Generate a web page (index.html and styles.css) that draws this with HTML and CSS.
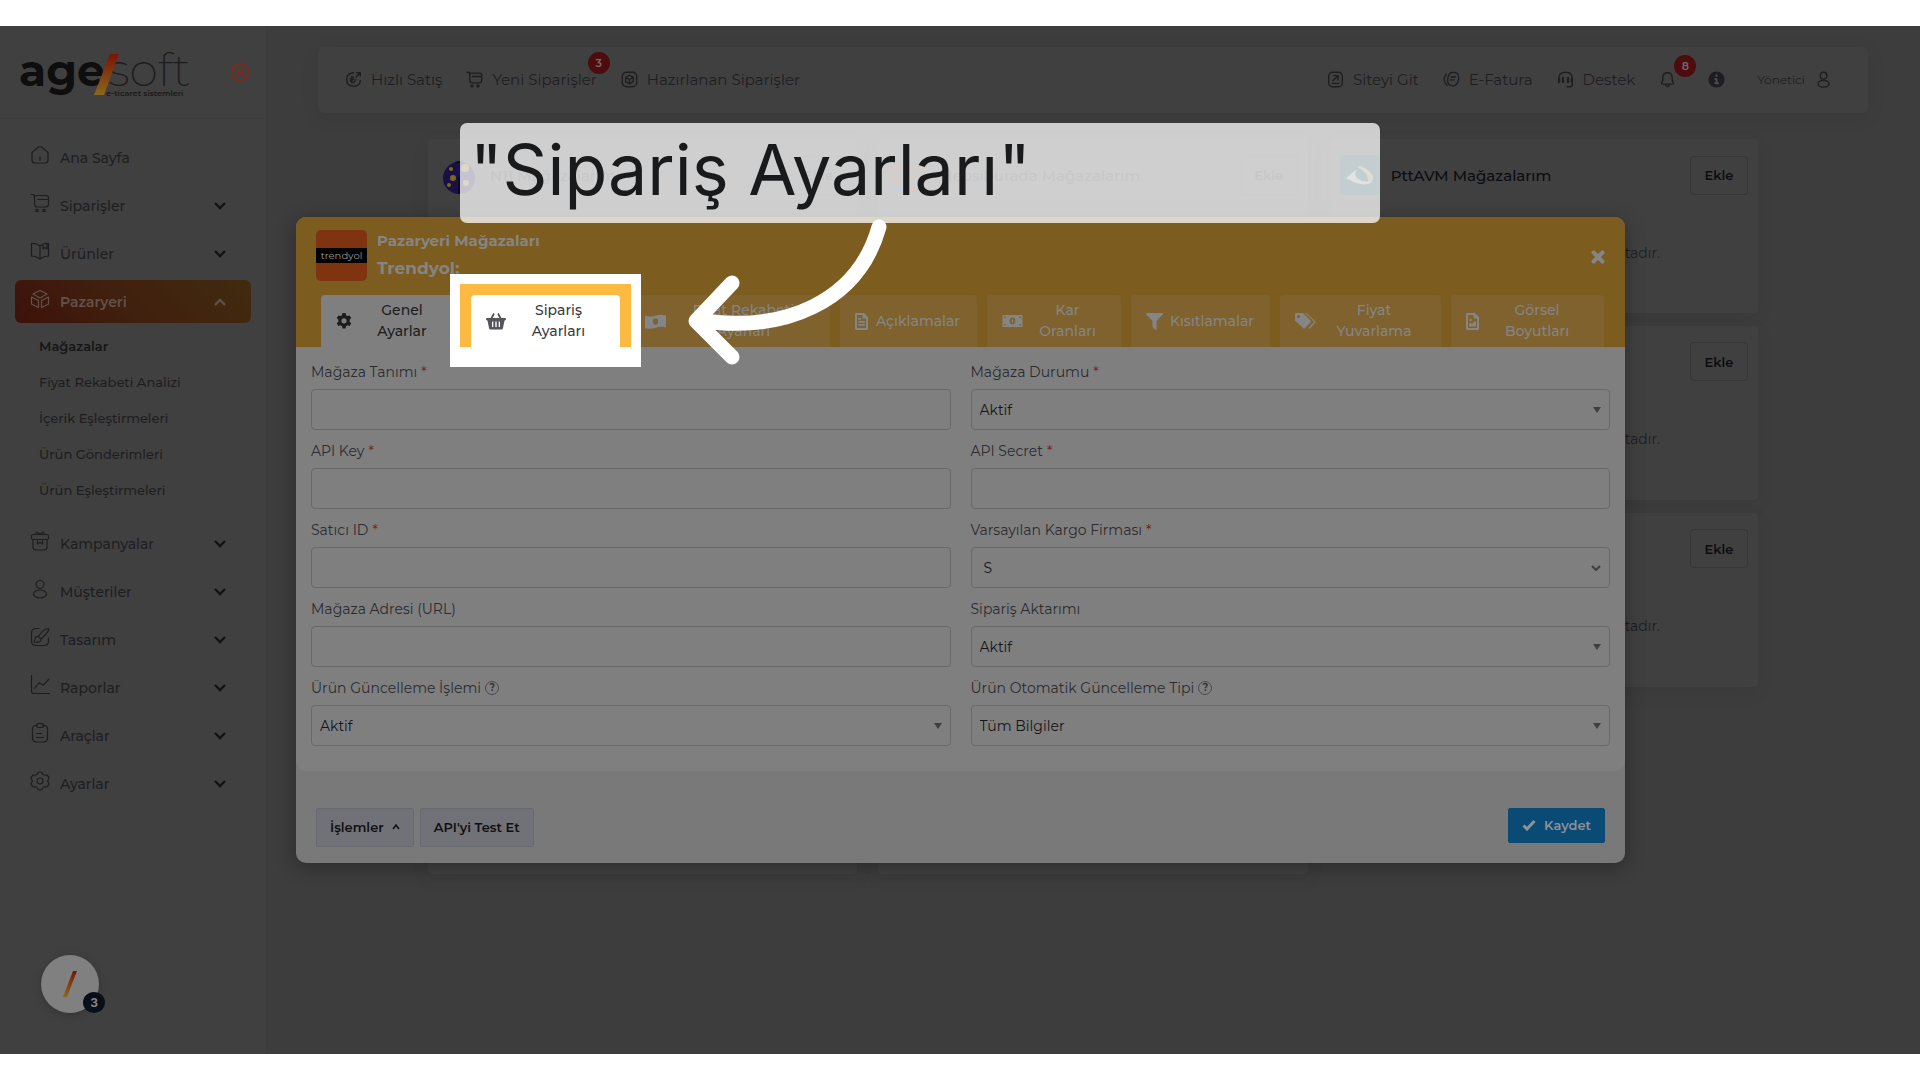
FILE: index.html
```
<!DOCTYPE html>
<html lang="tr">
<head>
    <meta charset="UTF-8">
    <meta name="viewport" content="width=device-width, initial-scale=1.0">
    <title>Pazaryeri Mağazaları</title>
    <link rel="stylesheet" href="styles.css">
</head>
<body>
    <!-- shared icons -->
    <svg class="defs" width="0" height="0" aria-hidden="true">
        <defs>
            <linearGradient id="flame" x1="0" y1="0" x2="0" y2="1">
                <stop offset="0" stop-color="#7a1404"/>
                <stop offset="1" stop-color="#8a681c"/>
            </linearGradient>
        </defs>
        <symbol id="i-down" viewBox="0 0 14 10"><path d="M2 2l5 5 5-5" fill="none" stroke="currentColor" stroke-width="2.4"/></symbol>
        <symbol id="i-up" viewBox="0 0 14 10"><path d="M2 8l5-5 5 5" fill="none" stroke="currentColor" stroke-width="2.4"/></symbol>
        <symbol id="i-home" viewBox="0 0 20 20"><path d="M2 7.500L8.500 2q1.500-1 3 0L18 7.500V15q0 3-3 3H5q-3 0-3-3zM10 12v3"/></symbol>
        <symbol id="i-cart" viewBox="0 0 20 20"><path d="M1 1.500h2.500L4.500 5M4.500 2.500H16q2.500 0 2.500 2.500v6q0 3-3 3H7.500q-3 0-3-3zM7.500 6.500h10"/><circle cx="7" cy="17.500" r="1.200"/><circle cx="14" cy="17.500" r="1.200"/></symbol>
        <symbol id="i-book" viewBox="0 0 20 20"><path d="M10 5Q6.500 2 1.500 2.500v12.500Q6 15 10 18q4-3 8.500-3V2.500Q13.500 2 10 5zM10 5v13M13 3v5l2-1.500L17 8V3"/></symbol>
        <symbol id="i-box" viewBox="0 0 20 20"><path d="M10 1.500l7 3.500-7 4-7-4zM1.500 8l7 3.500v7l-7-3.500zM18.500 8l-7 3.500v7l7-3.500z"/></symbol>
        <symbol id="i-gift" viewBox="0 0 20 20"><path d="M3 3.500h14q1.500 0 1.500 2v1.500q0 1.500-1.500 1.500H3Q1.500 8.500 1.500 7V5.500q0-2 1.500-2zM3 8.500V16q0 3 3 3h8q3 0 3-3V8.500M5 3.500l2-2.500 3 2.500L13 1l2 2.500M7.500 8.500v4.500l2.500-1.500 2.500 1.500V8.500"/></symbol>
        <symbol id="i-user" viewBox="0 0 20 20"><circle cx="10" cy="5.500" r="4"/><ellipse cx="10" cy="15" rx="6.500" ry="4"/></symbol>
        <symbol id="i-brush" viewBox="0 0 20 20"><path d="M9 1.500H6Q1.500 1.500 1.500 6v8q0 4.500 4.500 4.500h8q4.500 0 4.500-4.500v-3M8.500 9.500Q13 2 18 1.500q1.500 0 .5 2-2 4-7.500 8.500zM8.500 9.500q-3-.5-3.500 3L4 15q7 1.500 7-3"/></symbol>
        <symbol id="i-chart" viewBox="0 0 20 20"><path d="M1.500 0v16q0 2.500 2.500 2.500h16M4.500 13.500l4-5q1-1 2 0l1.500 1q1 1 2 0l5-5.500"/></symbol>
        <symbol id="i-clip" viewBox="0 0 20 20"><path d="M7 2.500H6Q2.500 2.500 2.500 6v9q0 4 4 4h7q4 0 4-4V6q0-3.500-3.500-3.500h-1M6.500 10.500h5M6.500 14.500h7"/><rect x="6.500" y=".7" width="7" height="3.800" rx="1.900"/></symbol>
        <symbol id="i-cog" viewBox="0 0 20 20"><circle cx="10" cy="10" r="3"/><path d="M8 1.500q2-1 4 0l.8 2 2.200.8 2-.3q1.800 1.500 2 3.500L17.500 10l1.500 2.500q-.5 2-2 3.500l-2-.3-2.200.8-.8 2q-2 1-4 0l-.8-2-2.200-.8-2 .3q-1.500-1.500-2-3.500L2.500 10 1 7.500Q1.500 5.500 3 4l2 .3 2.200-.8z"/></symbol>
        <symbol id="i-sale" viewBox="0 0 20 20"><path d="M10 2Q2 2.500 2 10t8 8q8 0 8-7M13 7l5-5M14 2h4v4M8 6v8q4 0 4-4M6 9.500l4-2M6 12l4-2"/></symbol>
        <symbol id="i-pack" viewBox="0 0 20 20"><rect x="1.500" y="1.500" width="17" height="17" rx="5"/><path d="M10 5l4.500 2.500v5L10 15l-4.500-2.500v-5zM5.500 7.500L10 10l4.500-2.500M10 10v5"/></symbol>
        <symbol id="i-link" viewBox="0 0 20 20"><rect x="2" y="1.500" width="16" height="17" rx="4.500"/><path d="M7 11.500l5.500-5.500M8 5.500h5v5M6 14.500h8"/></symbol>
        <symbol id="i-bill" viewBox="0 0 20 20"><path d="M9 2q5-1 8 1 2 2 1.500 6Q18 15 14 17q-4 1.500-7-1-2-2-1.500-6Q6 4 9 2zM4 4q-3 2-2.500 7 .5 4 3.500 6M9.500 7h5M9 10.500h4"/></symbol>
        <symbol id="i-help" viewBox="0 0 20 20"><path d="M2 10V9Q2 1.500 10 1.500T18 9v7q0 2.500-2.500 2.500H12"/><path d="M2.500 9v4M7 8v5M13 8v5M17.500 9v4" stroke-width="2.600"/></symbol>
        <symbol id="i-bell" viewBox="0 0 20 20"><path d="M10 2Q4.500 2 4.500 8v3L3 14q0 1.500 1.500 1.500h11Q17 15.500 17 14l-1.500-3V8Q15.500 2 10 2zM7.500 16q2.500 4.500 5 0"/></symbol>
        <symbol id="i-info" viewBox="0 0 20 20"><circle cx="10" cy="10" r="9.500" fill="currentColor" stroke="none"/><path d="M8.500 9.500H10V14M8.500 14.500h3.500M10 5v1" stroke="#4b4b50" stroke-width="2.400"/></symbol>
        <symbol id="i-gear" viewBox="0 0 16 16"><path fill="currentColor" fill-rule="evenodd" d="M6.500 0h3l.5 2.200 1.500.9L13.700 2.500l1.500 2.600L13.600 6.700v2l1.600 1.600-1.500 2.600-2.200-.6-1.500.9-.5 2.300h-3L6 13.200l-1.500-.9-2.200.6L.8 10.300l1.600-1.600v-2L.8 5.100l1.500-2.600 2.200.6L6 2.200zM8 5.200a2.600 2.600 0 100 5.200 2.600 2.600 0 000-5.200z"/></symbol>
        <symbol id="i-basket" viewBox="0 0 20 18"><path d="M4.500 8L8 1.500M15.500 8L12 1.500" stroke="currentColor" stroke-width="1.800" fill="none"/><path fill="currentColor" fill-rule="evenodd" d="M1 6h18q1 0 1 1t-1 1.500h-.5L17 16q-.3 1.500-1.500 1.500h-11Q3.300 17.500 3 16L1.500 8.500H1Q0 8 0 7t1-1zM6 9.500v5.500h1.300V9.500zM9.300 9.500v5.500h1.400V9.500zM12.700 9.500v5.500H14V9.500z"/></symbol>
        <symbol id="i-money" viewBox="0 0 20 14"><path fill="currentColor" fill-rule="evenodd" d="M0 1h20v12H0zM10 3.500a2.800 3.500 0 100 7 2.800 3.500 0 000-7zM1.500 2.500v1.500h1.500V2.500zM17 2.500v1.500h1.500V2.500zM1.500 10v1.500h1.500V10zM17 10v1.500h1.500V10zM9.500 5h1v4h-1z"/></symbol>
        <symbol id="i-wavemoney" viewBox="0 0 20 16"><path fill="currentColor" fill-rule="evenodd" d="M0 2.500q5 1.500 10 0t10-.5v11.500q-5-1-10 .5t-10 .5zM10 5a2.500 3 0 100 6 2.500 3 0 000-6z"/></symbol>
        <symbol id="i-file" viewBox="0 0 13 17"><path fill="currentColor" fill-rule="evenodd" d="M1.500 0H9l4 4v11.500q0 1.500-1.500 1.500h-10Q0 17 0 15.500v-14Q0 0 1.500 0zM2 2v13h9V5.500H7.500V2z"/><path fill="currentColor" d="M3.200 8h6.600v1.700H3.200zM3.200 11h6.600v1.700H3.200zM3.200 5h2.800v1.700H3.200z"/></symbol>
        <symbol id="i-filter" viewBox="0 0 17 17"><path fill="currentColor" d="M.5 0h16q1 .5.300 1.500L10.500 8v8.500q-.5.800-1.500 0L6.500 14V8L.2 1.500Q-.3.500.500 0z"/></symbol>
        <symbol id="i-tags" viewBox="0 0 21 16"><path fill="currentColor" fill-rule="evenodd" d="M0 1.500Q0 0 1.500 0H8l7.500 7.500q1 1 0 2L10 15q-1 1-2 0L0 7.500zM3.500 2a1.500 1.500 0 100 3 1.500 1.500 0 000-3zM10 0h1.500l8.500 8q1 1 0 2l-5.500 6-1-1 5-5.500q.7-.7 0-1.500z"/></symbol>
        <symbol id="i-image" viewBox="0 0 13 17"><path fill="currentColor" fill-rule="evenodd" d="M1.500 0H9l4 4v11.500q0 1.500-1.500 1.500h-10Q0 17 0 15.500v-14Q0 0 1.500 0zM2 2v13h9V5.500H7.500V2z"/><path fill="currentColor" d="M3 13.500V11l1.500-1.500L6 11l3-3 1 1v4.500z"/><circle cx="4.500" cy="7" r="1.300" fill="currentColor"/></symbol>
    </svg>

    <div class="screen">
        <aside class="sidebar">
            <div class="brand">
                <svg class="logo" width="172" height="60" viewBox="0 0 172 60" role="img" aria-label="agesoft">
                    <text class="logo-bold" x="2" y="44">age</text>
                    <text class="logo-thin" x="91" y="44">soft</text>
                    <path d="M93 12h9L87 53H77z" fill="url(#flame)"/>
                    <text class="logo-tag" x="89" y="54">e-ticaret sistemleri</text>
                </svg>
                <svg class="target" width="20" height="20" viewBox="0 0 20 20"><circle cx="10" cy="10" r="8.500"/><circle cx="10" cy="10" r="2.500"/></svg>
            </div>
            <nav class="menu">
                <a href="#"><svg class="icon"><use href="#i-home"/></svg><span>Ana Sayfa</span></a>
                <a href="#"><svg class="icon"><use href="#i-cart"/></svg><span>Siparişler</span><svg class="chev"><use href="#i-down"/></svg></a>
                <a href="#"><svg class="icon"><use href="#i-book"/></svg><span>Ürünler</span><svg class="chev"><use href="#i-down"/></svg></a>
                <a href="#" class="active"><svg class="icon"><use href="#i-box"/></svg><span>Pazaryeri</span><svg class="chev"><use href="#i-up"/></svg></a>
                <div class="submenu">
                    <a href="#" class="current">Mağazalar</a>
                    <a href="#">Fiyat Rekabeti Analizi</a>
                    <a href="#">İçerik Eşleştirmeleri</a>
                    <a href="#">Ürün Gönderimleri</a>
                    <a href="#">Ürün Eşleştirmeleri</a>
                </div>
                <a href="#"><svg class="icon"><use href="#i-gift"/></svg><span>Kampanyalar</span><svg class="chev"><use href="#i-down"/></svg></a>
                <a href="#"><svg class="icon"><use href="#i-user"/></svg><span>Müşteriler</span><svg class="chev"><use href="#i-down"/></svg></a>
                <a href="#"><svg class="icon"><use href="#i-brush"/></svg><span>Tasarım</span><svg class="chev"><use href="#i-down"/></svg></a>
                <a href="#"><svg class="icon"><use href="#i-chart"/></svg><span>Raporlar</span><svg class="chev"><use href="#i-down"/></svg></a>
                <a href="#"><svg class="icon"><use href="#i-clip"/></svg><span>Araçlar</span><svg class="chev"><use href="#i-down"/></svg></a>
                <a href="#"><svg class="icon"><use href="#i-cog"/></svg><span>Ayarlar</span><svg class="chev"><use href="#i-down"/></svg></a>
            </nav>
            <button class="chat" aria-label="Sohbet">
                <svg width="14" height="26" viewBox="0 0 14 26"><path d="M10 0h4L4 26H0z" fill="url(#flame)"/></svg>
                <span class="chat-count">3</span>
            </button>
        </aside>

        <div class="main">
            <header class="topbar">
                <a href="#"><svg class="icon"><use href="#i-sale"/></svg>Hızlı Satış</a>
                <a href="#"><svg class="icon"><use href="#i-cart"/></svg>Yeni Siparişler<span class="badge">3</span></a>
                <a href="#"><svg class="icon"><use href="#i-pack"/></svg>Hazırlanan Siparişler</a>
                <span class="spacer"></span>
                <a href="#"><svg class="icon"><use href="#i-link"/></svg>Siteyi Git</a>
                <a href="#"><svg class="icon"><use href="#i-bill"/></svg>E-Fatura</a>
                <a href="#"><svg class="icon"><use href="#i-help"/></svg>Destek</a>
                <a href="#" aria-label="Bildirimler"><svg class="icon"><use href="#i-bell"/></svg><span class="badge badge-bell">8</span></a>
                <a href="#" class="info" aria-label="Bilgi"><svg class="icon"><use href="#i-info"/></svg></a>
                <a href="#" class="account">Yönetici<svg class="icon"><use href="#i-user"/></svg></a>
            </header>

            <div class="stores">
                <section class="store covered">
                    <div class="store-head">
                        <svg width="40" height="40" viewBox="0 0 40 40"><circle cx="20" cy="23" r="16" fill="#1a1047"/><path d="M20 22v17" stroke="#0b0820" stroke-width="2"/><path d="M15 8q5-4 10 0z" fill="#0b0820"/><g fill="#7a6c14"><circle cx="14" cy="23" r="3"/><circle cx="26" cy="13" r="4"/><circle cx="12" cy="14" r="2"/><circle cx="27" cy="28" r="3"/><circle cx="10" cy="30" r="2"/></g></svg>
                        <h2>N11 Mağazalarım</h2><button>Ekle</button>
                    </div>
                </section>
                <section class="store covered">
                    <div class="store-head">
                        <svg width="40" height="40" viewBox="0 0 40 40"><text class="hb" x="1" y="16">hepsi</text><text class="hb" x="1" y="27">burada</text><path d="M2 33h28q-14 8-28 0z" fill="#27427c"/><path d="M14 33h16q-6 4-14 4z" fill="#7a3010"/></svg>
                        <h2>Hepsiburada Mağazalarım</h2><button>Ekle</button>
                    </div>
                </section>
                <section class="store">
                    <div class="store-head">
                        <svg width="40" height="40" viewBox="0 0 40 40"><rect width="40" height="40" rx="4" fill="#123c46"/><path d="M6 23l11-9q-3 5-1 8 6 6 14 4l3 0q-5 5-13 3-8-2-14-6z" fill="#8a8a8a"/><path d="M17 12q3-1 4-1 11 5 12 12 0 4-5 3 1-8-11-14z" fill="#7d7c5c"/></svg>
                        <h2>PttAVM Mağazalarım</h2><button>Ekle</button>
                    </div>
                    <p>Mağazanız bulunmamaktadır.</p>
                </section>
                <section class="store"></section>
                <section class="store"></section>
                <section class="store">
                    <div class="store-head"><button>Ekle</button></div>
                    <p>Mağazanız bulunmamaktadır.</p>
                </section>
                <section class="store"></section>
                <section class="store"></section>
                <section class="store">
                    <div class="store-head"><button>Ekle</button></div>
                    <p>Mağazanız bulunmamaktadır.</p>
                </section>
                <section class="store"></section>
                <section class="store"></section>
            </div>
        </div>

        <div class="overlay">
            <form class="modal">
                <div class="modal-head">
                    <div class="modal-title">
                        <div class="trendyol"><span>trendyol</span></div>
                        <div class="titles">
                            <h1>Pazaryeri Mağazaları</h1>
                            <strong>Trendyol:</strong>
                        </div>
                        <button type="button" class="close" aria-label="Kapat">
                            <svg width="14" height="14" viewBox="0 0 14 14"><path d="M2.500 2.500l9 9M11.500 2.500l-9 9" stroke="currentColor" stroke-width="4" stroke-linecap="round"/></svg>
                        </button>
                    </div>
                    <div class="tabs">
                        <button type="button" class="tab open"><svg width="16" height="16"><use href="#i-gear"/></svg><span>Genel<br>Ayarlar</span></button>
                        <button type="button" class="tab spot"><svg width="20" height="18"><use href="#i-basket"/></svg><span>Sipariş<br>Ayarları</span></button>
                        <button type="button" class="tab"><svg width="21" height="17"><use href="#i-wavemoney"/></svg><span>Fiyat Rekabeti<br>Ayarları</span></button>
                        <button type="button" class="tab"><svg width="13" height="17"><use href="#i-file"/></svg><span>Açıklamalar</span></button>
                        <button type="button" class="tab"><svg width="21" height="14"><use href="#i-money"/></svg><span>Kar<br>Oranları</span></button>
                        <button type="button" class="tab"><svg width="17" height="17"><use href="#i-filter"/></svg><span>Kısıtlamalar</span></button>
                        <button type="button" class="tab"><svg width="21" height="16"><use href="#i-tags"/></svg><span>Fiyat<br>Yuvarlama</span></button>
                        <button type="button" class="tab"><svg width="13" height="17"><use href="#i-image"/></svg><span>Görsel<br>Boyutları</span></button>
                    </div>
                </div>

                <div class="fields">
                    <div class="field">
                        <label for="name">Mağaza Tanımı <i>*</i></label>
                        <input type="text" id="name">
                    </div>
                    <div class="field">
                        <label for="state">Mağaza Durumu <i>*</i></label>
                        <div class="select"><select id="state"><option>Aktif</option></select><svg width="8" height="6"><path d="M0 0h8L4 6z" fill="currentColor"/></svg></div>
                    </div>
                    <div class="field">
                        <label for="key">API Key <i>*</i></label>
                        <input type="text" id="key">
                    </div>
                    <div class="field">
                        <label for="secret">API Secret <i>*</i></label>
                        <input type="text" id="secret">
                    </div>
                    <div class="field">
                        <label for="seller">Satıcı ID <i>*</i></label>
                        <input type="text" id="seller">
                    </div>
                    <div class="field">
                        <label for="cargo">Varsayılan Kargo Firması <i>*</i></label>
                        <div class="select native"><select id="cargo"><option>S</option></select><svg width="10" height="6"><path d="M1 1l4 4 4-4" fill="none" stroke="currentColor" stroke-width="2"/></svg></div>
                    </div>
                    <div class="field">
                        <label for="url">Mağaza Adresi (URL)</label>
                        <input type="text" id="url">
                    </div>
                    <div class="field">
                        <label for="transfer">Sipariş Aktarımı</label>
                        <div class="select"><select id="transfer"><option>Aktif</option></select><svg width="8" height="6"><path d="M0 0h8L4 6z" fill="currentColor"/></svg></div>
                    </div>
                    <div class="field">
                        <label for="update">Ürün Güncelleme İşlemi <span class="hint">?</span></label>
                        <div class="select"><select id="update"><option>Aktif</option></select><svg width="8" height="6"><path d="M0 0h8L4 6z" fill="currentColor"/></svg></div>
                    </div>
                    <div class="field">
                        <label for="type">Ürün Otomatik Güncelleme Tipi <span class="hint">?</span></label>
                        <div class="select"><select id="type"><option>Tüm Bilgiler</option></select><svg width="8" height="6"><path d="M0 0h8L4 6z" fill="currentColor"/></svg></div>
                    </div>
                </div>

                <div class="modal-foot">
                    <button type="button" class="btn">İşlemler<svg width="8" height="6"><path d="M1 5l3-4 3 4" fill="none" stroke="currentColor" stroke-width="1.500"/></svg></button>
                    <button type="button" class="btn">API'yi Test Et</button>
                    <button type="submit" class="btn save"><svg width="14" height="12"><path d="M1.500 6.500l3.500 3.500L12.500 2" fill="none" stroke="currentColor" stroke-width="3"/></svg>Kaydet</button>
                </div>
            </form>
        </div>

        <!-- step hint with its arrow -->
        <div class="callout">"Sipariş Ayarları"</div>
        <svg class="arrow" width="220" height="160" viewBox="680 215 220 160">
            <path d="M879 227C858 302 784 334 697 320M732 283L696 321L732 357"/>
        </svg>
    </div>
</body>
</html>
```
FILE: styles.css
```
* {
    box-sizing: border-box;
}

body {
    margin: 0;
    padding: 26px 0;
    background-color: #fff;
    color: #1e1e21;
    font-family: Montserrat, Inter, sans-serif;
    font-size: 14px;
}

a {
    color: inherit;
    text-decoration: none;
}

button,
input,
select {
    font: inherit;
    color: inherit;
}

.defs {
    position: absolute;
}

.screen {
    position: relative;
    display: flex;
    height: calc(100vh - 52px);
    overflow: hidden;
    background-color: #3d3d3d;
}

.icon {
    width: 20px;
    height: 20px;
    flex: none;
    fill: none;
    stroke: currentColor;
    stroke-width: 1.2;
    stroke-linecap: round;
    stroke-linejoin: round;
}

/* sidebar */

.sidebar {
    position: relative;
    width: 267px;
    flex: none;
    background-color: #404040;
    border-right: 1px solid #3c3c3c;
}

.brand {
    display: flex;
    align-items: center;
    justify-content: space-between;
    height: 93px;
    padding: 0 16px 0 17px;
    border-bottom: 1px solid #3d3d3d;
}

.logo {
    overflow: visible;
}

.logo-bold {
    font-size: 44px;
    font-weight: 700;
    fill: #0e0e0e;
}

.logo-thin {
    font-size: 46px;
    font-weight: 200;
    fill: #1c1c1c;
}

.logo-tag {
    font-size: 8px;
    font-weight: 600;
    fill: #181818;
}

.target {
    fill: none;
    stroke: #7a2c20;
    stroke-width: 2;
}

.menu {
    display: flex;
    flex-direction: column;
    gap: 5px;
    padding: 17px 15px;
}

.menu > a {
    display: flex;
    align-items: center;
    height: 43px;
    padding: 0 24px 0 15px;
    border-radius: 6px;
    font-weight: 500;
}

.menu > a span {
    flex: 1;
    padding-left: 10px;
}

.menu .icon {
    margin-bottom: 6px;
}

.menu .chev {
    width: 14px;
    height: 10px;
    color: #131315;
}

.menu > .active {
    background: linear-gradient(45deg, #3d110b, #40200e 45%, #402b10);
    color: #625248;
    font-weight: 600;
}

.menu > .active .chev {
    color: #625248;
}

.submenu {
    display: flex;
    flex-direction: column;
    padding-bottom: 9px;
    font-size: 13px;
    font-weight: 500;
}

.submenu a {
    padding-left: 24px;
    line-height: 36px;
}

.submenu .current {
    color: #151517;
    font-weight: 600;
}

.chat {
    position: absolute;
    left: 41px;
    bottom: 41px;
    display: flex;
    align-items: center;
    justify-content: center;
    width: 58px;
    height: 58px;
    border: none;
    border-radius: 50%;
    background-color: #808080;
    box-shadow: 0 2px 8px rgba(0, 0, 0, 0.2);
}

.chat-count {
    position: absolute;
    right: -6px;
    bottom: 0;
    width: 22px;
    height: 21px;
    border-radius: 50%;
    background-color: #090f1a;
    color: #848484;
    font-family: Inter, sans-serif;
    font-size: 12px;
    font-weight: 700;
    line-height: 21px;
}

/* top bar */

.main {
    flex: 1;
    padding: 21px 52px 0 51px;
}

.topbar {
    display: flex;
    align-items: center;
    gap: 24px;
    height: 66px;
    padding: 0 36px 2px 27px;
    border-radius: 6px;
    background-color: #404040;
    box-shadow: 0 5px 20px rgba(0, 0, 0, 0.07);
    font-size: 15px;
}

.topbar a {
    position: relative;
    display: flex;
    align-items: center;
    gap: 9px;
}

.topbar .icon {
    width: 17px;
    height: 17px;
    stroke-width: 1.6;
}

.spacer {
    flex: 1;
}

.topbar .account {
    gap: 10px;
    margin-left: 8px;
    font-size: 12px;
}

.info {
    margin-left: 8px;
}

.badge {
    position: absolute;
    top: -18px;
    right: -13px;
    width: 22px;
    height: 22px;
    border-radius: 50%;
    background-color: #4d0c0e;
    color: #77696a;
    font-size: 11px;
    font-weight: 600;
    line-height: 22px;
    text-align: center;
}

.badge-bell {
    top: -16px;
    right: -20px;
}

/* store cards behind the dialog */

.stores {
    display: grid;
    grid-template-columns: repeat(3, 1fr);
    grid-auto-rows: 174px;
    gap: 13px 21px;
    padding: 26px 110px 0;
}

.store {
    padding: 16px 10px 0 11px;
    border-radius: 4px;
    background-color: #404040;
    box-shadow: 0 5px 20px rgba(0, 0, 0, 0.06);
}

.store-head {
    display: flex;
    align-items: center;
    gap: 11px;
    color: #0c0c10;
}

.store h2 {
    flex: 1;
    margin: 0;
    font-size: 15px;
    font-weight: 500;
}

.store button {
    width: 58px;
    height: 39px;
    margin-left: auto;
    padding: 0;
    border: 1px solid #363636;
    border-radius: 4px;
    background: none;
    font-size: 13px;
    font-weight: 600;
}

.store p {
    margin: 49px 88px 0 0;
    text-align: right;
}

.covered h2,
.covered button,
.covered text {
    opacity: 0.6;
}

.hb {
    font-size: 11px;
    font-weight: 700;
    fill: #7a3010;
}

/* dialog */

.overlay {
    position: absolute;
    inset: 0;
    padding: 191px 295px 0 296px;
}

.modal {
    border-radius: 10px;
    background-color: #797979;
    box-shadow: 0 4px 20px rgba(0, 0, 0, 0.3);
}

.modal-head {
    padding: 13px 20px 0;
    border-radius: 10px 10px 0 0;
    background-color: #7d5c20;
    color: #858585;
}

.modal-title {
    display: flex;
    gap: 10px;
}

.trendyol {
    display: flex;
    align-items: center;
    width: 51px;
    height: 51px;
    border-radius: 5px;
    background-color: #7f3311;
}

.trendyol span {
    width: 51px;
    background-color: #000;
    color: #9a9a9a;
    font-size: 10px;
    line-height: 15px;
    text-align: center;
}

.titles {
    flex: 1;
}

.titles h1,
.titles strong {
    display: block;
    margin: 0;
    font-size: 15px;
    font-weight: 700;
    line-height: 22px;
}

.titles strong {
    margin-top: 5px;
    font-size: 17px;
}

.close {
    align-self: center;
    display: flex;
    margin-top: 2px;
    padding: 0;
    border: none;
    background: none;
}

.tabs {
    display: grid;
    grid-template-columns: 140fr 149fr 200fr 137fr 134fr 139fr 161fr 153fr;
    gap: 10px;
    padding: 14px 1px 0 5px;
}

.tab {
    display: flex;
    align-items: center;
    height: 52px;
    padding: 0 15px;
    border: none;
    border-radius: 4px 4px 0 0;
    background-color: #7f622d;
    font-size: 14px;
    font-weight: 500;
    line-height: 21px;
    white-space: nowrap;
}

.tab svg {
    flex: none;
}

.tab span {
    flex: 1;
    margin-left: 6px;
    text-align: center;
}

.tab.open {
    background-color: #7f7f7f;
    color: #1c1c1e;
}

/* highlighted tab: white frame, full-brightness header colour, tab face */
.tab.spot {
    position: relative;
    isolation: isolate;
    color: #3b3b40;
}

.tab.spot svg {
    color: #55555a;
}

.tab.spot::before,
.tab.spot::after {
    content: "";
    position: absolute;
    z-index: -1;
}

.tab.spot::before {
    inset: -21px -21px -20px;
    background: linear-gradient(#fdba41, #fdba41) 10px 10px / calc(100% - 20px) calc(100% - 30px) no-repeat #fff;
}

.tab.spot::after {
    inset: 0;
    border-radius: 4px 4px 0 0;
    background-color: #fff;
}

.fields {
    display: grid;
    grid-template-columns: 1fr 1fr;
    gap: 10px 20px;
    padding: 14px 15px 25px;
    border-radius: 0 0 10px 10px;
    background-color: #7f7f7f;
}

.field label {
    display: flex;
    align-items: center;
    gap: 4px;
    height: 22px;
    margin-bottom: 6px;
    color: #2c2c30;
}

.field label i {
    color: #7b1c1c;
    font-style: normal;
}

.hint {
    width: 14px;
    height: 14px;
    border: 1px solid #4a4a4e;
    border-radius: 50%;
    font-size: 10px;
    font-weight: 600;
    line-height: 12px;
    text-align: center;
}

.field input,
.field select {
    display: block;
    width: 100%;
    height: 41px;
    padding: 0 8px;
    border: 1px solid #696969;
    border-radius: 4px;
    background-color: transparent;
    color: #151518;
    appearance: none;
}

.select {
    display: grid;
    align-items: center;
    color: #3f3f42;
}

.select > * {
    grid-area: 1 / 1;
}

.select svg {
    justify-self: end;
    margin-right: 9px;
    pointer-events: none;
}

.select.native select {
    padding-left: 12px;
}

.modal-foot {
    display: flex;
    align-items: flex-start;
    gap: 6px;
    padding: 37px 20px 16px;
}

.btn {
    display: flex;
    align-items: center;
    gap: 8px;
    height: 39px;
    padding: 0 13px 2px;
    border: 1px solid #686a72;
    border-radius: 2px;
    background-color: #707277;
    color: #101014;
    font-size: 13px;
    font-weight: 600;
}

.btn.save {
    height: 35px;
    margin-left: auto;
    border-color: #0a4b76;
    background-color: #0a4b76;
    color: #8b9299;
}

/* step hint */

.callout {
    position: absolute;
    top: 97px;
    left: 460px;
    right: 540px;
    height: 100px;
    padding: 0 10px;
    border-radius: 7px;
    background-color: rgba(255, 255, 255, 0.75);
    color: #191a1c;
    font-family: Inter, sans-serif;
    font-size: 70px;
    line-height: 94px;
}

.arrow {
    position: absolute;
    top: 189px;
    left: 680px;
    fill: none;
    stroke: #fff;
    stroke-width: 15;
    stroke-linecap: round;
    stroke-linejoin: round;
}
```
